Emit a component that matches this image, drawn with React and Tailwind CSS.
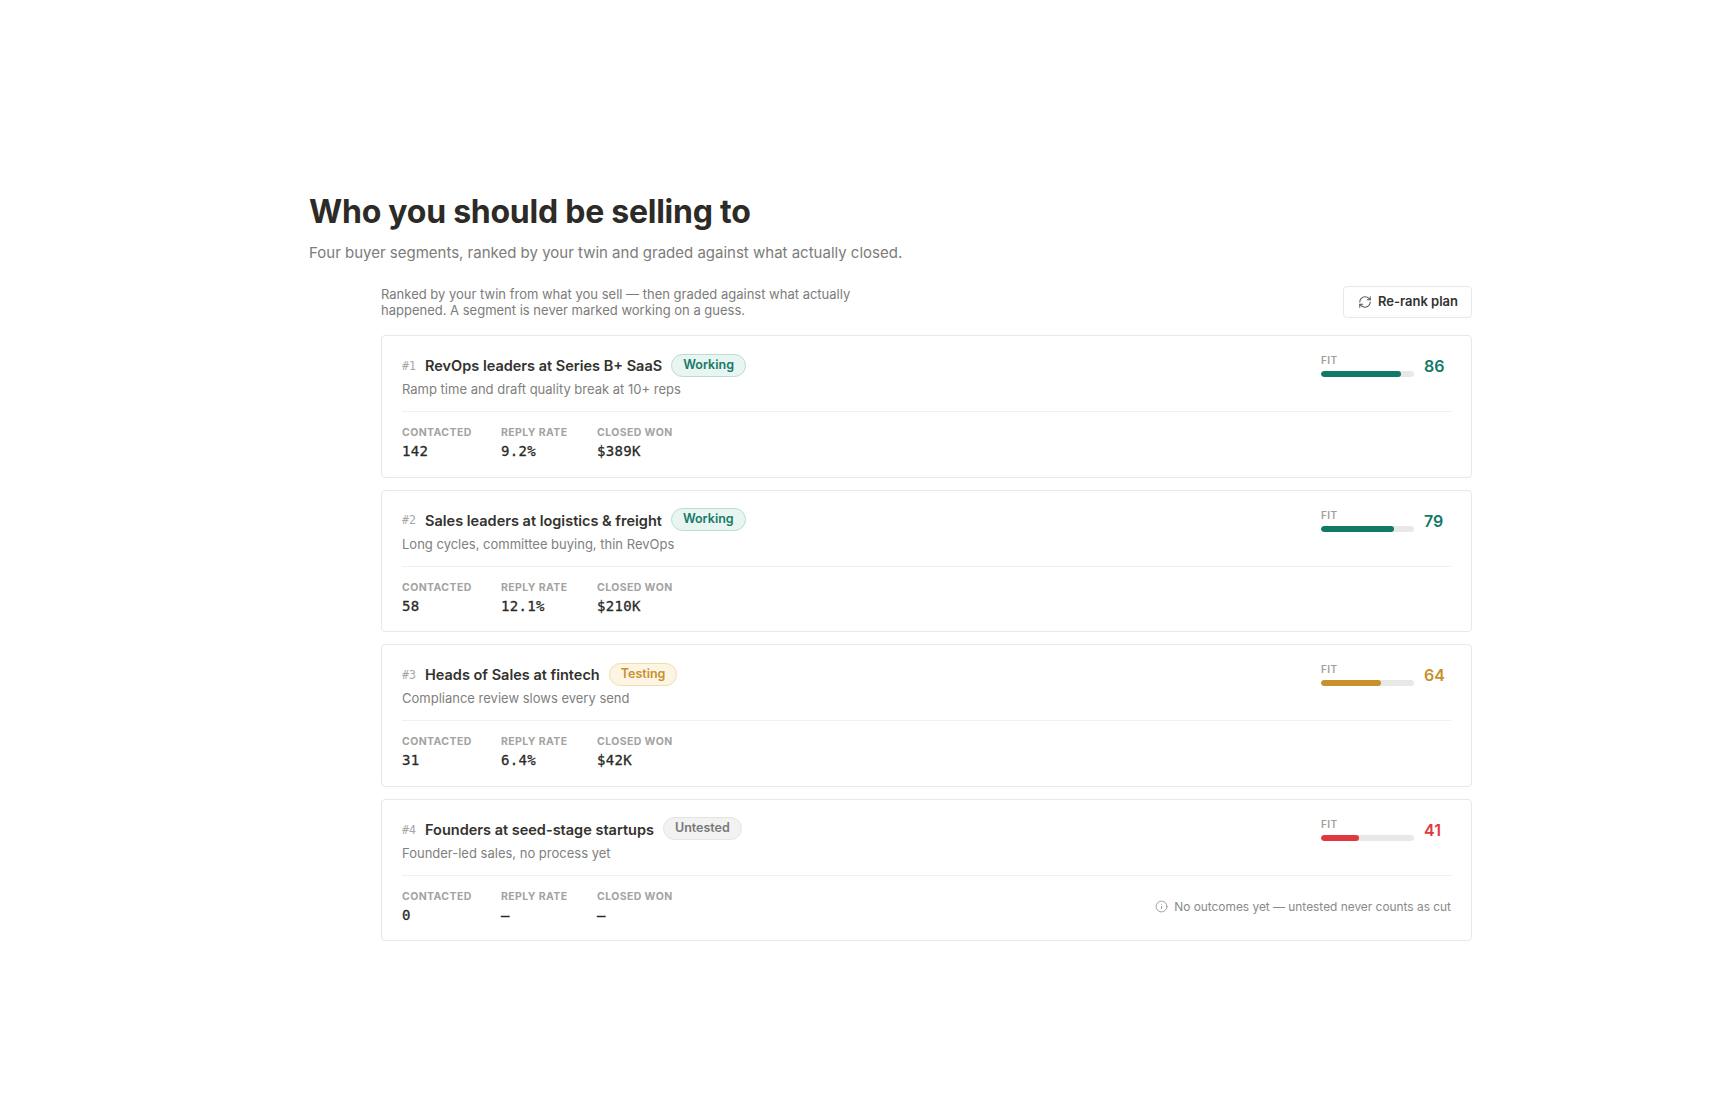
import { RefreshCw, Info } from "lucide-react";

const segments = [
  {
    rank: "#1",
    title: "RevOps leaders at Series B+ SaaS",
    note: "Ramp time and draft quality break at 10+ reps",
    status: "Working",
    fit: 86,
    contacted: "142",
    reply: "9.2%",
    won: "$389K",
  },
  {
    rank: "#2",
    title: "Sales leaders at logistics & freight",
    note: "Long cycles, committee buying, thin RevOps",
    status: "Working",
    fit: 79,
    contacted: "58",
    reply: "12.1%",
    won: "$210K",
  },
  {
    rank: "#3",
    title: "Heads of Sales at fintech",
    note: "Compliance review slows every send",
    status: "Testing",
    fit: 64,
    contacted: "31",
    reply: "6.4%",
    won: "$42K",
  },
  {
    rank: "#4",
    title: "Founders at seed-stage startups",
    note: "Founder-led sales, no process yet",
    status: "Untested",
    fit: 41,
    contacted: "0",
    reply: "—",
    won: "—",
  },
];

const pillStyles = {
  Working: "bg-[#e9f5f1] border-[#b8ddd1] text-[#157a68]",
  Testing: "bg-[#fdf5e3] border-[#f3dca8] text-[#c8902f]",
  Untested: "bg-[#f2f2f1] border-[#e4e4e2] text-[#77777a]",
};

const barColor = (fit) => {
  if (fit >= 70) return "bg-[#0f7a65]";
  if (fit >= 50) return "bg-[#c9902e]";
  return "bg-[#e0383e]";
};

const textColor = (fit) => {
  if (fit >= 70) return "text-[#0f7a65]";
  if (fit >= 50) return "text-[#c9902e]";
  return "text-[#e0383e]";
};

const Stat = ({ label, value, className }) => (
  <div className={className}>
    <div className="text-[10.5px] leading-[14px] font-bold tracking-[0.4px] text-[#a3a3a1]">
      {label}
    </div>
    <div className="mt-[2px] font-['DejaVu_Sans_Mono',monospace] text-[14px] tracking-[0.35px] leading-[18px] text-[#2a2a28] [-webkit-text-stroke:0.3px]">
      {value}
    </div>
  </div>
);

const SegmentCard = ({ segment }) => (
  <div className="w-[1091px] h-[142.6px] rounded-[4px] border border-[#e8e8e6] bg-white px-5 pt-[17px]">
    <div className="flex justify-between h-[56px]">
      <div>
        <div className="flex items-center h-[26px]">
          <span className="w-[23px] mt-[1px] font-['DejaVu_Sans_Mono',monospace] text-[11.5px] text-[#a6a6a4]">
            {segment.rank}
          </span>
          <span className="text-[14.5px] font-semibold text-[#33322e]">{segment.title}</span>
          <span
            className={`ml-[9px] -mt-[2px] h-[23px] px-[11px] rounded-full border text-[12.5px] leading-[19px] font-semibold ${pillStyles[segment.status]}`}
          >
            {segment.status}
          </span>
        </div>
        <div className="mt-[1px] text-[13px] leading-[18px] text-[#80807e]">{segment.note}</div>
      </div>
      <div className="flex items-center h-[26px] mr-[7px]">
        <div className="w-[93px]">
          <div className="-mt-[1px] text-[10px] leading-[12px] font-semibold tracking-[0.4px] text-[#9f9f9d]">FIT</div>
          <div className="mt-[5px] h-[6px] rounded-full bg-[#e8e8e6] overflow-hidden">
            <div
              className={`h-full rounded-full ${barColor(segment.fit)}`}
              style={{ width: `${segment.fit}%` }}
            />
          </div>
        </div>
        <span className={`ml-[10px] w-[20px] text-[16px] font-semibold ${textColor(segment.fit)}`}>
          {segment.fit}
        </span>
      </div>
    </div>
    <div className="mt-[2px] border-t border-[#f0f0ee] pt-[14px] flex items-center justify-between">
      <div className="flex">
        <Stat label="CONTACTED" value={segment.contacted} className="w-[99px]" />
        <Stat label="REPLY RATE" value={segment.reply} className="w-[96px]" />
        <Stat label="CLOSED WON" value={segment.won} />
      </div>
      {segment.status === "Untested" && (
        <div className="flex items-center gap-[6px] text-[11.9px] text-[#8a8a88]">
          <Info size={13} strokeWidth={1.5} />
          No outcomes yet — untested never counts as cut
        </div>
      )}
    </div>
  </div>
);

export default function App() {
  return (
    <div className="min-h-screen bg-white pl-[309px] pt-[190px] font-['Inter',sans-serif]">
      <h1 className="text-[32px] leading-[44px] font-bold tracking-[-0.25px] text-[#2d2b27]">
        Who you should be selling to
      </h1>
      <p className="mt-[8px] text-[15px] leading-[22px] text-[#7c7c7a]">
        Four buyer segments, ranked by your twin and graded against what actually closed.
      </p>
      <div className="ml-[72px] w-[1091px] mt-[22px]">
        <div className="flex items-start justify-between">
          <p className="w-[480px] text-[13px] leading-[16px] text-[#7c7c7a]">
            Ranked by your twin from what you sell — then graded against what actually happened. A segment is never
            marked working on a guess.
          </p>
          <button className="flex items-center gap-[6px] h-[32px] pl-[14px] pr-[13px] rounded-[4px] border border-[#e8e8e6] bg-white text-[13px] font-semibold text-[#33332f]">
            <RefreshCw size={14} strokeWidth={1.75} className="text-[#55555a]" />
            Re-rank plan
          </button>
        </div>
        <div className="mt-[17px] flex flex-col gap-3">
          {segments.map((s) => (
            <SegmentCard key={s.rank} segment={s} />
          ))}
        </div>
      </div>
    </div>
  );
}
